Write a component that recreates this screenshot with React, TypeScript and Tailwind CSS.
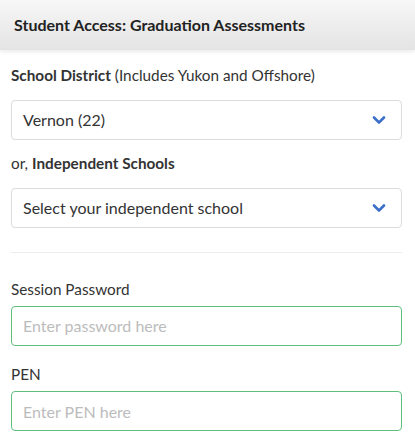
import React from 'react';

const Chevron: React.FC = () => (
  <svg width="14" height="10" viewBox="0 0 14 10" className="shrink-0">
    <path d="M2 2.5 L7 7.5 L12 2.5" fill="none" stroke="#3b6fc9" strokeWidth="2.6" strokeLinecap="round" strokeLinejoin="round" />
  </svg>
);

const SelectBox: React.FC<{ value: string }> = ({ value }) => (
  <div className="flex h-10 items-center justify-between rounded border border-[#dcdcdc] bg-white pl-[11px] pr-[15px] text-[16px] text-[#333]">
    <span>{value}</span>
    <Chevron />
  </div>
);

const TextBox: React.FC<{ placeholder: string }> = ({ placeholder }) => (
  <input
    placeholder={placeholder}
    className="h-10 w-full rounded border border-[#5fbf7d] bg-white px-[11px] text-[16px] text-[#333] outline-none placeholder:text-[#bcbcbc]"
  />
);

const App: React.FC = () => {
  return (
    <div className="min-h-[439px] w-[415px] bg-white font-['Lato',sans-serif] text-[#333]">
      <div className="flex h-[50px] items-center bg-gradient-to-b from-[#f7f7f7] to-[#e4e4e4] px-[14px] shadow-[0_2px_4px_rgba(0,0,0,0.08)]">
        <h1 className="text-[16px] font-bold text-[#222]">Student Access: Graduation Assessments</h1>
      </div>
      <div className="mr-[2px] px-[11px] pt-[14px]">
        <p className="text-[15.3px] leading-[22.5px]">
          <span className="font-bold">School District</span> (Includes Yukon and Offshore)
        </p>
        <div className="mt-[13px]">
          <SelectBox value="Vernon (22)" />
        </div>
        <p className="mt-[12px] text-[15.3px] leading-[22.5px]">
          or, <span className="font-bold">Independent Schools</span>
        </p>
        <div className="mt-[14px]">
          <SelectBox value="Select your independent school" />
        </div>
        <div className="mt-[24px] border-t border-[#eeeeee]" />
        <p className="mt-[25px] text-[15.3px] leading-[22.5px]">Session Password</p>
        <div className="mt-[5px]">
          <TextBox placeholder="Enter password here" />
        </div>
        <p className="mt-[17px] text-[15.3px] leading-[22.5px]">PEN</p>
        <div className="mt-[6px]">
          <TextBox placeholder="Enter PEN here" />
        </div>
      </div>
    </div>
  );
};

export default App;
